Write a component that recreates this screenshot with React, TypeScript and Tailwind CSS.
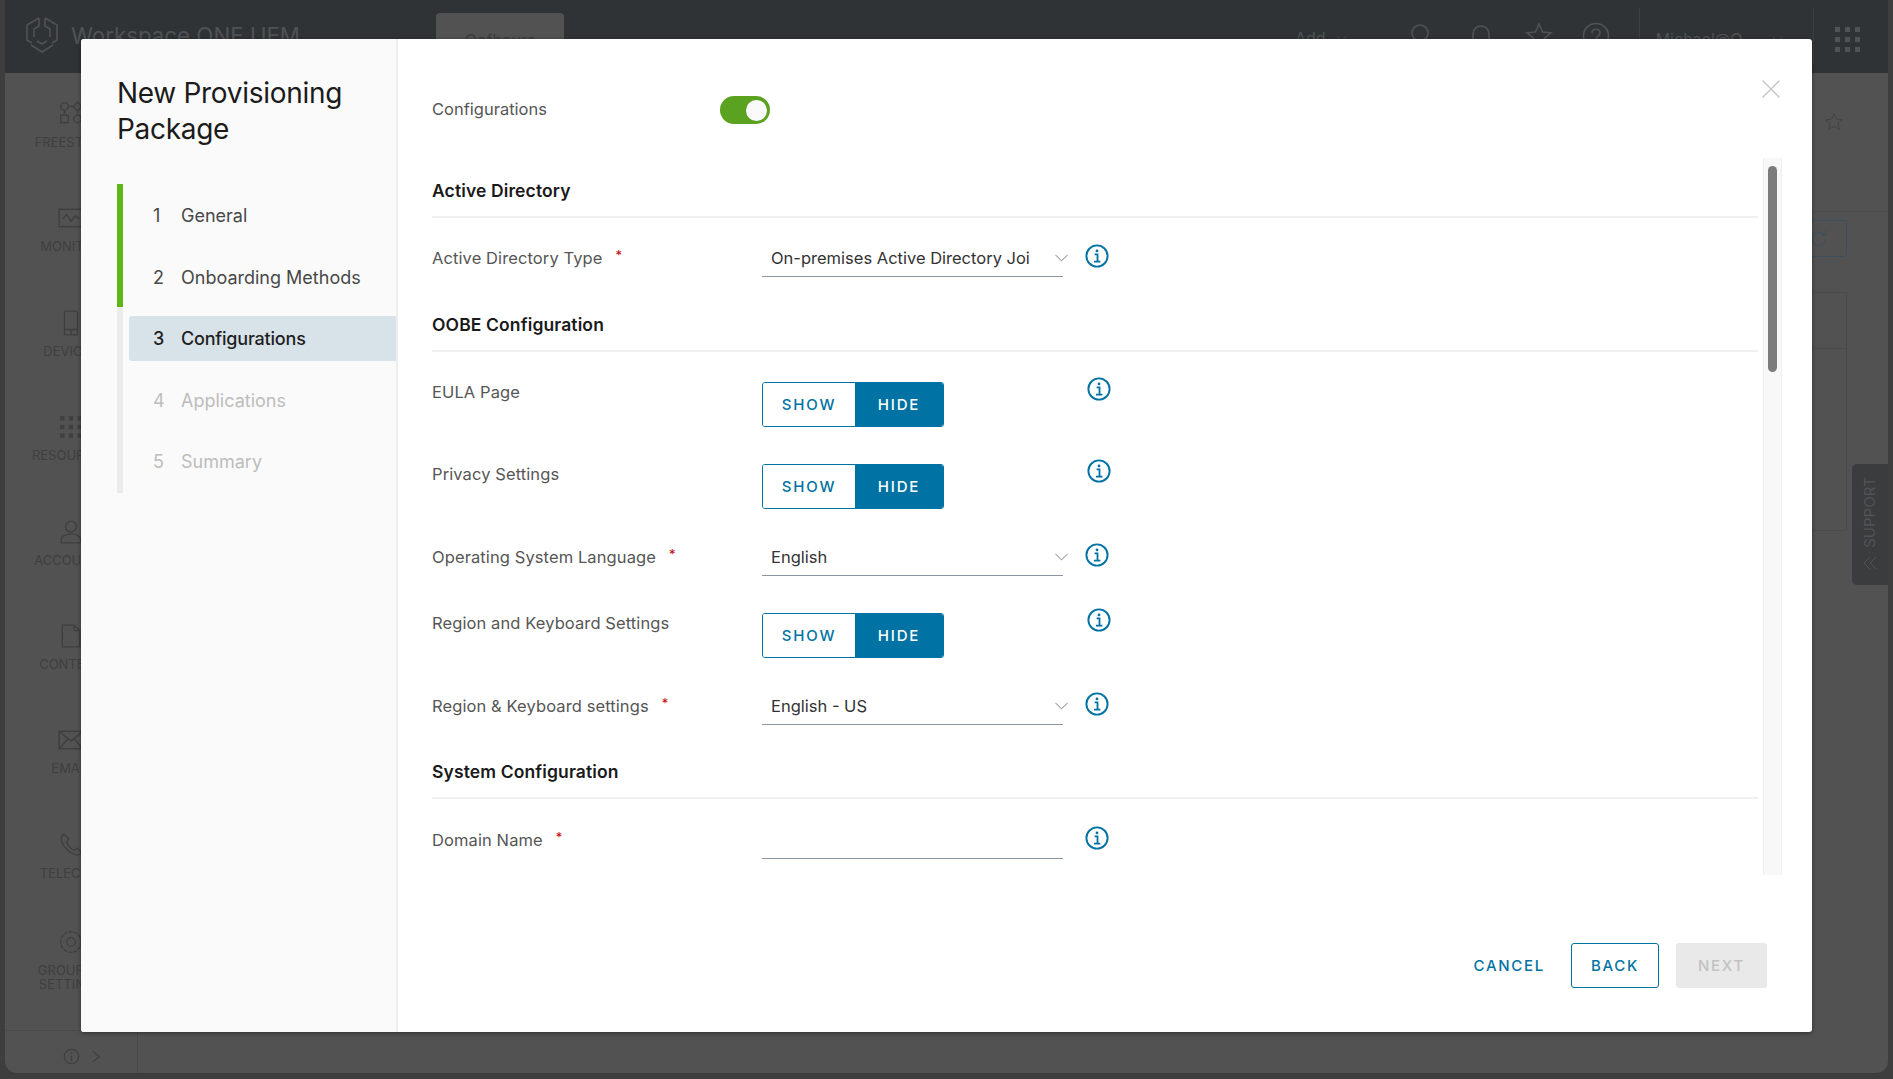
import React from "react";

function Info({ className = "" }: { className?: string }) {
  return (
    <svg viewBox="0 0 24 24" className={`w-6 h-6 shrink-0 ${className}`} fill="none" stroke="#0072a3">
      <circle cx="12" cy="12" r="10.6" strokeWidth="1.9" />
      <circle cx="12" cy="6.9" r="1.4" fill="#0072a3" stroke="none" />
      <path d="M9.6 10.4h2.9v7M9 17.6h6.4" strokeWidth="1.8" />
    </svg>
  );
}

function Chevron() {
  return (
    <svg viewBox="0 0 14 8" className="absolute right-[-5px] top-[15px] w-[13px] h-[8px]" fill="none" stroke="#a3a3a3" strokeWidth="1.1">
      <path d="M0.5 0.7 7 7l6.5-6.3" />
    </svg>
  );
}

function Star() {
  return <span className="text-red-700 text-[13px] leading-none ml-[13px] relative top-[-3px]">*</span>;
}

function Heading({ children, h, mb }: { children: React.ReactNode; h: string; mb: string }) {
  return (
    <div className={`${h} ${mb} flex items-end border-b-2 border-[#f0f0f0] text-[17.5px] leading-[24px] font-semibold text-[#1a1a1a] pb-[13px] tracking-[0.12px]`}>
      {children}
    </div>
  );
}

function Label({ children, req }: { children: React.ReactNode; req?: boolean }) {
  return (
    <div className="w-[330px] shrink-0 flex items-center text-[16.5px] text-[#565656] tracking-[0.1px]">
      <span>{children}</span>
      {req && <Star />}
    </div>
  );
}

function SelectRow({ label, value, mb }: { label: string; value?: string; mb: string }) {
  return (
    <div className={`flex h-[38px] ${mb}`}>
      <Label req>{label}</Label>
      <div className="w-[301px] h-[38px] relative border-b border-[#8b98a3] flex items-center pl-[9px] pt-[2px] text-[16.5px] text-[#333]">
        {value}
        {value && <Chevron />}
      </div>
      <Info className="ml-[22px] mt-[4.5px]" />
    </div>
  );
}

function ToggleRow({ label, mb }: { label: string; mb: string }) {
  return (
    <div className={`flex h-[45px] ${mb}`}>
      <div className="w-[330px] shrink-0 text-[16.5px] text-[#565656] leading-[20px] tracking-[0.1px]">{label}</div>
      <div className="w-[182px] h-[45px] flex rounded-[3px] border border-[#0072a3] overflow-hidden text-[15px] font-medium tracking-[1.8px]">
        <div className="w-[92px] pt-[2px] flex items-center justify-center bg-white text-[#0072a3]">SHOW</div>
        <div className="flex-1 pt-[2px] flex items-center justify-center bg-[#0072a3] text-white">HIDE</div>
      </div>
      <Info className="ml-[143px] mt-[-5px]" />
    </div>
  );
}

function NavItem({ label, icon, lines, className = "" }: { label: string; icon: React.ReactNode; lines?: string; className?: string }) {
  return (
    <div className={`h-[104.4px] flex flex-col items-center text-[#3f3f3f] ${className}`}>
      <div className="h-[34px] flex items-center">{icon}</div>
      <div className="mt-[4px] text-[13px] leading-[14px] text-center whitespace-pre-line">{lines ?? label}</div>
    </div>
  );
}

function Ic({ children }: { children: React.ReactNode }) {
  return (
    <svg viewBox="0 0 24 24" className="w-[26px] h-[26px]" fill="none" stroke="#3f3f3f" strokeWidth="1.3">
      {children}
    </svg>
  );
}

function Step({ n, label, state }: { n: number; label: string; state: "done" | "active" | "todo" }) {
  const color = state === "todo" ? "text-[#bdbdbd]" : state === "active" ? "text-[#1f1f1f] font-medium tracking-[-0.2px]" : "text-[#484848]";
  return (
    <div className={`h-[45px] flex items-center rounded-l-[3px] ${state === "active" ? "bg-[#d8e3e9]" : ""} ${color} mb-[16.5px] text-[18px]`}>
      <span className="w-[52px] pl-[24px]">{n}</span>
      <span>{label}</span>
    </div>
  );
}

export default function App() {
  return (
    <div className="relative w-[1893px] h-[1079px] overflow-hidden bg-[#3e3e3e] font-['Inter','Liberation_Sans',sans-serif]">
      <div className="ml-[5px] w-[1883px] h-[1074px] rounded-b-[12px] bg-[#525252] overflow-hidden flex flex-col border-b border-[#3a3a3a]">
        {/* header */}
        <div className="h-[73px] shrink-0 bg-[#303336] flex items-start text-[#4f5255]">
          <svg viewBox="0 0 34 36" className="w-[34px] h-[36px] ml-[20px] mt-[17px]" fill="none" stroke="#505356" strokeWidth="1.5">
            <path d="M14 1 2 8v15l5 3M20 1l12 7v15l-5 3M14 1v8l-5 3v8M20 1v8l5 3v8M6 28l11 7 11-7M17 27l-5-3M17 27l5-3" />
          </svg>
          <div className="ml-[12px] mt-[22px] text-[22.3px] leading-[28px] whitespace-nowrap">Workspace ONE UEM</div>
          <div className="ml-[136px] mt-[13px] w-[128px] h-[60px] rounded-t-[4px] bg-[#525252] text-[#3d3d3d] text-[16px] text-center pt-[15px]">Oofhours</div>
          <div className="ml-[731px] mt-[26px] text-[16px]">Add</div>
          <svg viewBox="0 0 12 8" className="w-[11px] h-[8px] ml-[10px] mt-[35px]" fill="none" stroke="#505356"><path d="M1 1l5 5 5-5" /></svg>
          <svg viewBox="0 0 24 24" className="w-[24px] h-[24px] ml-[62px] mt-[23px]" fill="none" stroke="#505356" strokeWidth="1.6"><circle cx="11" cy="10" r="8" /><path d="M17 16l6 6" /></svg>
          <svg viewBox="0 0 24 24" className="w-[24px] h-[26px] ml-[36px] mt-[22px]" fill="none" stroke="#505356" strokeWidth="1.6"><path d="M4 20V11c0-5 4-8 8-8s8 3 8 8v9z" /></svg>
          <svg viewBox="0 0 28 28" className="w-[28px] h-[28px] ml-[32px] mt-[22px]" fill="none" stroke="#505356" strokeWidth="1.6"><path d="M14 2l3.6 8 8.4.8-6.4 5.6 2 8.4L14 20l-7.6 4.8 2-8.4L2 10.8l8.4-.8z" /></svg>
          <svg viewBox="0 0 28 28" className="w-[28px] h-[28px] ml-[29px] mt-[22px]" fill="none" stroke="#505356" strokeWidth="1.6"><circle cx="14" cy="14" r="12.5" /><path d="M10 11c0-5 8-5 8 0 0 3-4 3-4 7" /></svg>
          <div className="w-px h-[56px] bg-[#3d4043] ml-[29px] mt-[8px]" />
          <div className="ml-[16px] mt-[27px] text-[16px] whitespace-nowrap">Michael@O</div>
          <svg viewBox="0 0 12 8" className="w-[11px] h-[8px] ml-[30px] mt-[36px]" fill="none" stroke="#505356"><path d="M1 1l5 5 5-5" /></svg>
          <div className="w-px h-[56px] bg-[#3d4043] ml-[30px] mt-[8px]" />
          <div className="ml-[21px] mt-[27px] grid grid-cols-3 gap-[5px] w-[25px]">
            {Array.from({ length: 9 }).map((_, i) => (
              <span key={i} className="w-[5px] h-[5px] bg-[#505356]" />
            ))}
          </div>
        </div>
        {/* page body */}
        <div className="flex-1 flex min-h-0">
          <div className="w-[133px] shrink-0 border-r border-[#4a4a4a] flex flex-col">
            <div className="flex-1 pt-[24px]">
              <NavItem label="FREESTYLE" icon={<Ic><circle cx="6" cy="5" r="3.5" /><path d="M9.5 5h5M6 8.5V12M18 9v3" /><path d="M18 1l4 4-4 4-4-4z" /><rect x="2.5" y="13" width="7" height="7" /><circle cx="18" cy="16.5" r="3.5" /></Ic>} />
              <NavItem label="MONITOR" icon={<Ic><rect x="1" y="4" width="22" height="16" /><path d="M4 13l4-4 4 6 4-5 4 3" /></Ic>} />
              <NavItem label="DEVICES" icon={<Ic><rect x="6" y="1" width="12" height="22" rx="1" /><path d="M6 18h12M12 18v5" /></Ic>} />
              <NavItem label="RESOURCES" icon={<svg viewBox="0 0 24 24" className="w-[26px] h-[26px]" fill="#3f3f3f">{[2, 10, 18].map((y) => [2, 10, 18].map((x) => <rect key={`${x}-${y}`} x={x} y={y} width="4" height="4" />))}</svg>} />
              <NavItem label="ACCOUNTS" icon={<Ic><circle cx="12" cy="7" r="5" /><path d="M3 22v-3c0-3 4-5 9-5s9 2 9 5v3z" /></Ic>} />
              <NavItem label="CONTENT" icon={<Ic><path d="M4 2h11l5 5v15H4z" /><path d="M15 2v5h5" /></Ic>} />
              <NavItem label="EMAIL" icon={<Ic><rect x="1" y="4" width="22" height="16" /><path d="M1 4l11 9 11-9M1 20l8-9M23 20l-8-9" /></Ic>} />
              <NavItem label="TELECOM" icon={<Ic><path d="M5 2C1 5 3 11 8 16s11 7 14 3l-4-4-3 2c-3-1-6-5-7-8l2-3z" /></Ic>} />
              <NavItem label="GROUPS" className="-mt-[7px]" lines={"GROUPS &\nSETTINGS"} icon={<Ic><circle cx="12" cy="12" r="4" /><circle cx="12" cy="12" r="9.5" strokeDasharray="3.5 1.2" /></Ic>} />
            </div>
            <div className="h-[46px] shrink-0 border-t border-[#4a4a4a] flex items-center justify-center gap-[12px] pt-[6px]">
              <svg viewBox="0 0 20 20" className="w-[17px] h-[17px] ml-[22px]" fill="none" stroke="#3f3f3f" strokeWidth="1.5"><circle cx="10" cy="10" r="8.5" /><path d="M10 9v6M10 5v2" /></svg>
              <svg viewBox="0 0 10 14" className="w-[9px] h-[13px]" fill="none" stroke="#3f3f3f" strokeWidth="1.3"><path d="M1 1l7 6-7 6" /></svg>
            </div>
          </div>
          <div className="flex-1 flex justify-end">
            <div className="w-[100px] mr-[41px] h-full flex flex-col items-end">
              <svg viewBox="0 0 24 24" className="w-[20px] h-[20px] mt-[39px] mr-[3px]" fill="none" stroke="#3f3f3f"><path d="M12 2l3 6.6 7 .7-5.3 4.6 1.6 7-6.3-3.7-6.3 3.7 1.6-7L2 9.3l7-.7z" /></svg>
              <div className="w-[141px] -mr-[41px] h-px bg-[#4d4d4d] mt-[79px]" />
              <div className="w-[56px] h-[37px] mt-[8px] rounded-[3px] border border-[#3d4f5c] flex items-center justify-center">
                <svg viewBox="0 0 24 24" className="w-[20px] h-[20px]" fill="none" stroke="#3d4f5c" strokeWidth="1.3"><path d="M20 12a8 8 0 1 1-2-5.4M20 2v5h-5" /></svg>
              </div>
              <div className="w-[100px] h-[239px] mt-[35px] border border-[#4a4a4a]">
                <div className="h-[56px] border-b border-[#4a4a4a]" />
              </div>
            </div>
          </div>
        </div>
      </div>

      {/* support tab */}
      <div className="absolute left-[1852px] top-[464px] w-[36px] h-[121px] rounded-l-[5px] bg-[#3b3c3d] flex flex-col items-center justify-end pb-[15px] gap-[8px] text-[#525354]">
        <span className="[writing-mode:vertical-rl] rotate-180 text-[15px]">SUPPORT</span>
        <svg viewBox="0 0 14 14" className="w-[14px] h-[14px]" fill="none" stroke="#525354"><path d="M1 7l6-6M1 7l6 6M7 7l6-6M7 7l6 6" /></svg>
      </div>

      {/* modal */}
      <div className="absolute left-[81px] top-[39px] w-[1731px] h-[993px] rounded-[3px] overflow-hidden bg-white flex shadow-[0_1px_4px_rgba(0,0,0,0.4)]">
        <div className="w-[317px] shrink-0 bg-[#fafafa] border-r-2 border-[#eeeeee] pl-[36px]">
          <h1 className="mt-[37px] text-[28px] leading-[35.5px] text-[#1b1b1b] font-normal tracking-[-0.3px]">New Provisioning<br />Package</h1>
          <div className="mt-[37px] flex relative">
            <div className="w-[6px] h-[309px] bg-[#ececec] relative">
              <div className="h-[123px] bg-[#5eb715]" />
            </div>
            <div className="ml-[6px] flex-1 pt-[9px]">
              <Step n={1} label="General" state="done" />
              <Step n={2} label="Onboarding Methods" state="done" />
              <Step n={3} label="Configurations" state="active" />
              <Step n={4} label="Applications" state="todo" />
              <Step n={5} label="Summary" state="todo" />
            </div>
          </div>
        </div>

        <div className="flex-1 relative flex flex-col pl-[34px] min-w-0">
          <svg viewBox="0 0 18 18" className="absolute right-[32px] top-[41px] w-[18px] h-[18px]" fill="none" stroke="#c4c4c4" strokeWidth="1.3"><path d="M.5.5l17 17M17.5.5l-17 17" /></svg>
          <div className="h-[119px] shrink-0 flex items-start pt-[57px] text-[16.5px] text-[#565656]">
            <div className="w-[288px] leading-[26px]">Configurations</div>
            <div className="w-[50px] h-[28px] rounded-full bg-[#5aa220] relative">
              <span className="absolute right-[3px] top-[3.5px] w-[21px] h-[21px] rounded-full bg-[#fafafa]" />
            </div>
          </div>

          <div className="h-[717px] shrink-0 overflow-hidden flex">
            <div className="w-[1326px] shrink-0 pt-[15px]">
              <Heading h="h-[45px]" mb="mb-[21px]">Active Directory</Heading>
              <SelectRow label="Active Directory Type" value="On-premises Active Directory Joi" mb="mb-[21px]" />
              <Heading h="h-[54px]" mb="mb-[30px]">OOBE Configuration</Heading>
              <ToggleRow label="EULA Page" mb="mb-[37px]" />
              <ToggleRow label="Privacy Settings" mb="mb-[29px]" />
              <SelectRow label="Operating System Language" value="English" mb="mb-[37px]" />
              <ToggleRow label="Region and Keyboard Settings" mb="mb-[29px]" />
              <SelectRow label="Region & Keyboard settings" value="English - US" mb="mb-[20px]" />
              <Heading h="h-[54px]" mb="mb-[22px]">System Configuration</Heading>
              <SelectRow label="Domain Name" mb="" />
            </div>
            <div className="ml-[5px] w-[19px] h-full bg-[#f8f8f8] border-x border-[#f0f0f0] pt-[8px] flex justify-center">
              <div className="w-[9px] h-[206px] rounded-full bg-[#7c7c7c]" />
            </div>
          </div>

          <div className="flex-1 flex justify-end items-start pt-[68px] pr-[45px] text-[15px] font-medium tracking-[1.7px]">
            <div className="h-[45px] pt-[2px] flex items-center text-[#0072a3] mr-[26px]">CANCEL</div>
            <div className="w-[88px] h-[45px] pt-[2px] flex items-center justify-center rounded-[3px] border border-[#0072a3] text-[#0072a3] mr-[17px]">BACK</div>
            <div className="w-[91px] h-[45px] pt-[2px] flex items-center justify-center rounded-[3px] bg-[#e9e9e9] text-[#c2c2c2]">NEXT</div>
          </div>
        </div>
      </div>
    </div>
  );
}
